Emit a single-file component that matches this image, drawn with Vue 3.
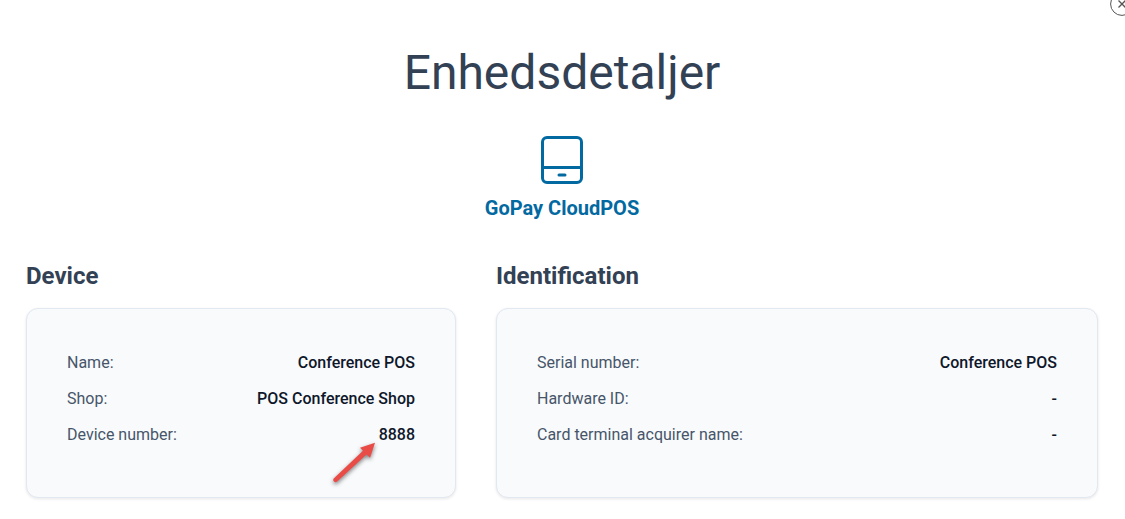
<script setup>
const device = [
  { label: 'Name:', value: 'Conference POS' },
  { label: 'Shop:', value: 'POS Conference Shop' },
  { label: 'Device number:', value: '8888', marked: true },
]
const identification = [
  { label: 'Serial number:', value: 'Conference POS' },
  { label: 'Hardware ID:', value: '-' },
  { label: 'Card terminal acquirer name:', value: '-' },
]
</script>

<template>
  <main class="dialog">
    <button class="close" type="button" aria-label="Close">
      <svg viewBox="0 0 24 24" width="24" height="24" fill="none" stroke="#555">
        <circle cx="12" cy="12" r="11.4" />
        <path d="M8.500 8.500l7 7M15.500 8.500l-7 7" stroke-width="1.300" />
      </svg>
    </button>
    <h1>Enhedsdetaljer</h1>
    <div class="product">
      <svg viewBox="0 0 42 48" width="42" height="48" fill="none" stroke="#0369a1" stroke-width="3">
        <rect x="1.5" y="1.5" width="39" height="45" rx="4.5" />
        <path d="M1.5 31.5h39" />
        <path d="M18 39h6" stroke-linecap="round" />
      </svg>
      <p>GoPay CloudPOS</p>
    </div>
    <div class="columns">
      <section>
        <h2>Device</h2>
        <dl class="card">
          <div v-for="row in device" :key="row.label" class="row">
            <dt>{{ row.label }}</dt>
            <dd>
              {{ row.value }}
              <svg v-if="row.marked" class="arrow" viewBox="0 0 50 50" width="50" height="50">
                <path d="M46 6.700L31 11.700L34 14.700L5 42.300A2.300 2.300 0 0 0 8.200 45.600L37.500 18.400L41 21.700Z" fill="#e94b46" />
              </svg>
            </dd>
          </div>
        </dl>
      </section>
      <section>
        <h2>Identification</h2>
        <dl class="card">
          <div v-for="row in identification" :key="row.label" class="row">
            <dt>{{ row.label }}</dt>
            <dd>{{ row.value }}</dd>
          </div>
        </dl>
      </section>
    </div>
  </main>
</template>

<style>
body { margin: 0; background: #fff; }
html { overflow: hidden; }
</style>

<style scoped>
.dialog {
  position: relative;
  padding: 45px 27px 20px 26px;
  font-family: Roboto, sans-serif;
  font-size: 16px;
  line-height: 24px;
  color: #334155;
}
.close {
  position: absolute;
  top: -8px;
  right: -9px;
  padding: 0;
  border: 0;
  background: none;
  cursor: pointer;
}
.close svg { display: block; }
h1, h2, p, dl, dd { margin: 0; }
h1 {
  font-size: 48px;
  line-height: 56px;
  font-weight: 400;
  text-align: center;
}
.product {
  display: flex;
  flex-direction: column;
  align-items: center;
  gap: 10px;
  margin-top: 35px;
  color: #0369a1;
}
.product svg { display: block; }
.product p {
  font-size: 20px;
  line-height: 28px;
  font-weight: 700;
}
.columns {
  display: grid;
  grid-template-columns: 5fr 7fr;
  gap: 40px;
  margin-top: 38px;
}
h2 {
  font-size: 24px;
  line-height: 32px;
  font-weight: 700;
}
.card {
  display: flex;
  flex-direction: column;
  gap: 12px;
  margin-top: 16px;
  padding: 42px 40px 50px;
  border: 1px solid #e2e8f0;
  border-radius: 12px;
  background: #f8fafc;
  box-shadow: 0 1px 3px rgba(15, 23, 42, 0.1);
}
.row {
  display: flex;
  justify-content: space-between;
}
dt { color: #475569; }
dd {
  position: relative;
  color: #0f172a;
  font-weight: 500;
}
.arrow {
  position: absolute;
  top: 13px;
  right: 36px;
  overflow: visible;
  filter: drop-shadow(0 2px 2px rgba(0, 0, 0, 0.5));
}
</style>
